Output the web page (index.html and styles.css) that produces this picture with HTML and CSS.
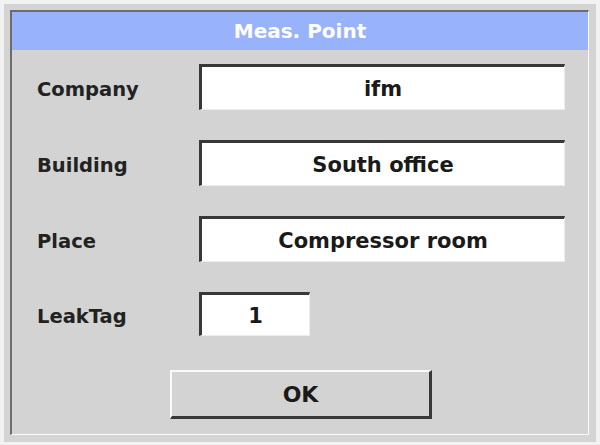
FILE: index.html
```html
<!DOCTYPE html>
<html lang="en">
<head>
    <meta charset="UTF-8">
    <meta name="viewport" content="width=device-width, initial-scale=1.0">
    <title>Meas. Point</title>
    <link rel="stylesheet" href="styles.css">
</head>
<body>
    <div class="frame">
        <div class="dialog">
            <header class="title-bar">Meas. Point</header>
            <form class="fields">
                <label class="field-name">Company</label>
                <div class="field-box">ifm</div>
                <label class="field-name">Building</label>
                <div class="field-box">South office</div>
                <label class="field-name">Place</label>
                <div class="field-box">Compressor room</div>
                <label class="field-name">LeakTag</label>
                <div class="field-box short">1</div>
            </form>
            <footer class="actions">
                <button type="button" class="ok-btn">OK</button>
            </footer>
        </div>
    </div>
</body>
</html>
```

FILE: styles.css
```css
body {
    margin: 0;
    background: #f2f2f2;
    font-family: "DejaVu Sans", Verdana, sans-serif;
}
.frame {
    margin: 4px;
    width: 579px;
    height: 425px;
    padding: 6px 7px 7px 6px;
    background: #d4d4d4;
}
.dialog {
    height: 422px;
    display: flex;
    flex-direction: column;
    background: #d3d3d3;
    border-top: 2px solid #6c6c6c;
    border-left: 2px solid #6c6c6c;
    border-right: 1px solid #fbfbfb;
    border-bottom: 1px solid #fbfbfb;
}
.title-bar {
    height: 38px;
    display: flex;
    align-items: center;
    justify-content: center;
    background: #98b3fc;
    color: #fff;
    font-size: 20px;
    font-weight: bold;
}
.fields {
    display: grid;
    grid-template-columns: 162px 366px;
    grid-template-rows: 46px 46px 46px 44px;
    row-gap: 30px;
    align-items: center;
    padding: 14px 0 0 25px;
}
.field-name {
    padding-top: 4px;
    font-size: 19.5px;
    font-weight: bold;
    color: #222;
}
.field-box {
    box-sizing: border-box;
    height: 100%;
    display: flex;
    align-items: center;
    justify-content: center;
    padding-top: 2px;
    background: #fff;
    border-top: 3px solid #383838;
    border-left: 3px solid #383838;
    border-right: 1px solid #ececec;
    border-bottom: 1px solid #ececec;
    font-size: 21px;
    font-weight: bold;
    color: #1a1a1a;
}
.field-box.short {
    width: 111px;
}
.actions {
    display: flex;
    justify-content: center;
    padding-top: 34px;
}
.ok-btn {
    box-sizing: border-box;
    width: 262px;
    height: 49px;
    margin-left: 2px;
    background: #d3d3d3;
    border-top: 2px solid #fafafa;
    border-left: 2px solid #fafafa;
    border-right: 3px solid #383838;
    border-bottom: 3px solid #383838;
    font-family: "DejaVu Sans", Verdana, sans-serif;
    font-size: 22px;
    font-weight: bold;
    color: #1a1a1a;
}
```
